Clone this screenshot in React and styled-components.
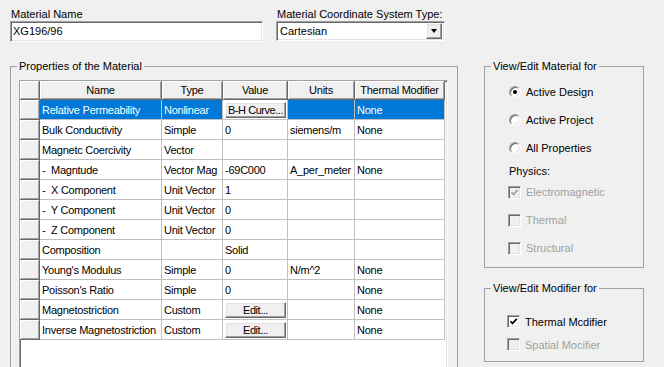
import React from 'react';
import styled, { createGlobalStyle, css } from 'styled-components';

const GlobalStyle = createGlobalStyle`
  html, body {
    margin: 0;
    padding: 0;
    background: #f0f0f0;
  }
  body {
    font-family: "Liberation Sans", Arial, sans-serif;
    font-size: 11px;
    color: #000;
  }
`;

// classic windows 3d edges
const sunken = css`
  border: 1px solid;
  border-color: #a0a0a0 #fff #fff #a0a0a0;
  box-shadow: inset 1px 1px 0 #696969, inset -1px -1px 0 #e3e3e3;
`;

const raised = css`
  border: 1px solid;
  border-color: #fff #696969 #696969 #fff;
  box-shadow: inset -1px -1px 0 #a0a0a0, inset 1px 1px 0 #e3e3e3;
`;

const Dialog = styled.div`
  width: 664px;
  height: 367px;
  overflow: hidden;
  box-sizing: border-box;
  padding: 8px 0 0 10px;
  background: #f0f0f0;
  display: flex;
  flex-direction: column;
`;

const TopRow = styled.div`
  display: flex;
  gap: 13px;
`;

const Field = styled.div`
  display: flex;
  flex-direction: column;
  width: ${p => p.$w}px;
`;

const Label = styled.div`
  height: 13px;
  line-height: 13px;
  padding-left: 1px;
`;

const TextBox = styled.div`
  ${sunken};
  box-sizing: border-box;
  height: 21px;
  background: #fff;
  padding: 0 2px;
  line-height: 19px;
`;

const Combo = styled.div`
  ${sunken};
  box-sizing: border-box;
  height: 20px;
  background: #fff;
  display: flex;
  align-items: center;
  padding: 0 2px 0 3px;
`;

const DropButton = styled.div`
  ${raised};
  box-sizing: border-box;
  margin-left: auto;
  width: 16px;
  height: 16px;
  background: #f0f0f0;
  display: flex;
  align-items: center;
  justify-content: center;

  &::after {
    content: '';
    border-top: 4px solid #000;
    border-left: 3.5px solid transparent;
    border-right: 3.5px solid transparent;
  }
`;

const Main = styled.div`
  display: flex;
  gap: 26px;
  margin-top: 18px;
  height: 330px;
  flex-shrink: 0;
`;

const GroupBox = styled.fieldset`
  margin: 0;
  padding: ${p => p.$pad || '0'};
  min-width: 0;
  box-sizing: border-box;
  width: ${p => p.$w}px;
  border: 1px solid #a0a0a0;
`;

const Legend = styled.legend`
  margin-left: 6px;
  padding: 0 2px;
  line-height: 13px;
  font-size: 11px;
`;

const GridFrame = styled.div`
  ${sunken};
  margin: 7px 9px 0 8px;
  height: 300px;
  background: #fff;
`;

const Table = styled.div`
  display: grid;
  grid-template-columns: 20px 122px 61px 65px 67px 90px;
  grid-template-rows: 19px;
  grid-auto-rows: 20px;
  letter-spacing: -0.25px;
`;

const HeadCell = styled.div`
  box-sizing: border-box;
  background: #f0f0f0;
  border-right: 1px solid #696969;
  border-bottom: 1px solid #696969;
  box-shadow: inset 1px 1px 0 #fff, inset -1px -1px 0 #a0a0a0;
  text-align: center;
  padding-top: 1px;
  line-height: 17px;
  white-space: nowrap;
  overflow: hidden;
`;

const RowHead = styled(HeadCell)``;

const Cell = styled.div`
  box-sizing: border-box;
  border-right: 1px solid #c0c0c0;
  border-bottom: 1px solid #c0c0c0;
  padding: 1px 2px 0;
  line-height: 18px;
  white-space: pre;
  overflow: hidden;
  background: ${p => (p.$sel ? '#0078d7' : '#fff')};
  color: ${p => (p.$sel ? '#fff' : '#000')};
`;

const ButtonCell = styled(Cell)`
  padding: 2px 1px 0 2px;
`;

const CellButton = styled.div`
  ${raised};
  box-sizing: border-box;
  width: 61px;
  height: 16px;
  background: #f0f0f0;
  color: #000;
  text-align: center;
  line-height: 14px;
  letter-spacing: -0.45px;
  white-space: nowrap;
  overflow: hidden;
`;

const SideColumn = styled.div`
  display: flex;
  flex-direction: column;
  gap: 14px;
  width: 160px;
`;

const OptionRow = styled.div`
  display: flex;
  align-items: center;
  gap: 5px;
  height: ${p => p.$h}px;
  padding-left: ${p => p.$indent}px;
  color: ${p => (p.$disabled ? '#a0a0a0' : '#000')};
`;

const Radio = styled.span`
  ${sunken};
  box-sizing: border-box;
  width: 12px;
  height: 12px;
  border-radius: 50%;
  background: #fff;
  display: flex;
  align-items: center;
  justify-content: center;

  &::after {
    content: '';
    display: ${p => (p.$checked ? 'block' : 'none')};
    width: 4px;
    height: 4px;
    border-radius: 50%;
    background: #000;
  }
`;

const Box = styled.span`
  ${sunken};
  box-sizing: border-box;
  width: 13px;
  height: 13px;
  background: ${p => (p.$disabled ? '#f0f0f0' : '#fff')};
  display: flex;
  align-items: center;
  justify-content: center;
`;

const SectionLabel = styled.div`
  padding: 3px 0 0 24px;
  height: 16px;
  box-sizing: border-box;
  line-height: 13px;
`;

const Check = ({ checked, disabled }) => (
  <Box $disabled={disabled}>
    {checked && (
      <svg width="9" height="9" viewBox="0 0 9 9">
        <path
          d="M1.5 4.2 L3.5 6.4 L7.8 1.8"
          fill="none"
          stroke={disabled ? '#a0a0a0' : '#000'}
          strokeWidth="1.7"
        />
      </svg>
    )}
  </Box>
);

const columns = ['Name', 'Type', 'Value', 'Units', 'Thermal Modifier'];

const rows = [
  { name: 'Relative Permeability', type: 'Nonlinear', button: 'B-H Curve...', units: '', mod: 'None', sel: true },
  { name: 'Bulk Conductivity', type: 'Simple', value: '0', units: 'siemens/m', mod: 'None' },
  { name: 'Magnetc Coercivity', type: 'Vector', value: '', units: '', mod: '' },
  { name: '-  Magntude', type: 'Vector Mag', value: '-69C000', units: 'A_per_meter', mod: 'None' },
  { name: '-  X Component', type: 'Unit Vector', value: '1', units: '', mod: '' },
  { name: '-  Y Component', type: 'Unit Vector', value: '0', units: '', mod: '' },
  { name: '-  Z Component', type: 'Unit Vector', value: '0', units: '', mod: '' },
  { name: 'Composition', type: '', value: 'Solid', units: '', mod: '' },
  { name: "Young's Modulus", type: 'Simple', value: '0', units: 'N/m^2', mod: 'None' },
  { name: "Poisson's Ratio", type: 'Simple', value: '0', units: '', mod: 'None' },
  { name: 'Magnetostriction', type: 'Custom', button: 'Edit...', units: '', mod: 'None' },
  { name: 'Inverse Magnetostriction', type: 'Custom', button: 'Edit...', units: '', mod: 'None' },
];

const PropertyGrid = () => (
  <GridFrame>
    <Table>
      <HeadCell />
      {columns.map(c => (
        <HeadCell key={c}>{c}</HeadCell>
      ))}
      {rows.map(r => (
        <React.Fragment key={r.name}>
          <RowHead />
          <Cell $sel={r.sel}>{r.name}</Cell>
          <Cell $sel={r.sel}>{r.type}</Cell>
          {r.button ? (
            <ButtonCell>
              <CellButton>{r.button}</CellButton>
            </ButtonCell>
          ) : (
            <Cell $sel={r.sel}>{r.value}</Cell>
          )}
          <Cell $sel={r.sel}>{r.units}</Cell>
          <Cell $sel={r.sel}>{r.mod}</Cell>
        </React.Fragment>
      ))}
    </Table>
  </GridFrame>
);

export default function App() {
  return (
    <>
      <GlobalStyle />
      <Dialog>
        <TopRow>
          <Field $w={253}>
            <Label>Material Name</Label>
            <TextBox>XG196/96</TextBox>
          </Field>
          <Field $w={169}>
            <Label>Material Coordinate System Type:</Label>
            <Combo>
              Cartesian
              <DropButton />
            </Combo>
          </Field>
        </TopRow>

        <Main>
          <GroupBox $w={448}>
            <Legend>Properties of the Material</Legend>
            <PropertyGrid />
          </GroupBox>

          <SideColumn>
            <GroupBox $w={160} $pad="5px 0 5px 0">
              <Legend>View/Edit Material for</Legend>
              <OptionRow $h={28} $indent={24}>
                <Radio $checked />
                Active Design
              </OptionRow>
              <OptionRow $h={28} $indent={24}>
                <Radio />
                Active Project
              </OptionRow>
              <OptionRow $h={28} $indent={24}>
                <Radio />
                All Properties
              </OptionRow>
              <SectionLabel>Physics:</SectionLabel>
              <OptionRow $h={28} $indent={23} $disabled>
                <Check checked disabled />
                Electromagnetic
              </OptionRow>
              <OptionRow $h={28} $indent={23} $disabled>
                <Check disabled />
                Thermal
              </OptionRow>
              <OptionRow $h={28} $indent={23} $disabled>
                <Check disabled />
                Structural
              </OptionRow>
            </GroupBox>

            <GroupBox $w={160} $pad="15px 0 5px 0">
              <Legend>View/Edit Modifier for</Legend>
              <OptionRow $h={23} $indent={22}>
                <Check checked />
                Thermal Mcdifier
              </OptionRow>
              <OptionRow $h={23} $indent={22} $disabled>
                <Check disabled />
                Spatial Mocifier
              </OptionRow>
            </GroupBox>
          </SideColumn>
        </Main>
      </Dialog>
    </>
  );
}
